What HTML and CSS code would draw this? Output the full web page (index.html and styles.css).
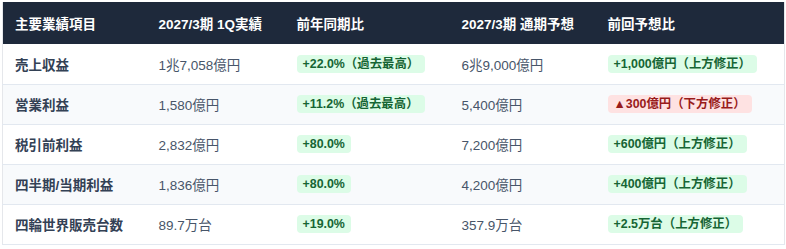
FILE: index.html
```html
<!DOCTYPE html>
<html lang="ja">
<head>
<meta charset="utf-8">
<link rel="stylesheet" href="styles.css">
</head>
<body>
<table class="results">
  <colgroup>
    <col class="c1"><col class="c2"><col class="c3"><col class="c4"><col class="c5">
  </colgroup>
  <thead>
    <tr>
      <th>主要業績項目</th>
      <th>2027/3期 1Q実績</th>
      <th>前年同期比</th>
      <th>2027/3期 通期予想</th>
      <th>前回予想比</th>
    </tr>
  </thead>
  <tbody>
    <tr>
      <td class="label">売上収益</td>
      <td class="val">1兆7,058億円</td>
      <td><span class="badge up">+22.0%（過去最高）</span></td>
      <td class="val">6兆9,000億円</td>
      <td><span class="badge up">+1,000億円（上方修正）</span></td>
    </tr>
    <tr>
      <td class="label">営業利益</td>
      <td class="val">1,580億円</td>
      <td><span class="badge up">+11.2%（過去最高）</span></td>
      <td class="val">5,400億円</td>
      <td><span class="badge down">▲300億円（下方修正）</span></td>
    </tr>
    <tr>
      <td class="label">税引前利益</td>
      <td class="val">2,832億円</td>
      <td><span class="badge up">+80.0%</span></td>
      <td class="val">7,200億円</td>
      <td><span class="badge up">+600億円（上方修正）</span></td>
    </tr>
    <tr>
      <td class="label">四半期/当期利益</td>
      <td class="val">1,836億円</td>
      <td><span class="badge up">+80.0%</span></td>
      <td class="val">4,200億円</td>
      <td><span class="badge up">+400億円（上方修正）</span></td>
    </tr>
    <tr>
      <td class="label">四輪世界販売台数</td>
      <td class="val">89.7万台</td>
      <td><span class="badge up">+19.0%</span></td>
      <td class="val">357.9万台</td>
      <td><span class="badge up">+2.5万台（上方修正）</span></td>
    </tr>
  </tbody>
</table>
</body>
</html>
```
FILE: styles.css
```css
html, body {
  margin: 0;
  padding: 0;
  background: #ffffff;
}
body {
  padding: 2px;
  font-family: "Liberation Sans", "Noto Sans CJK JP", sans-serif;
}
.results {
  width: 782px;
  border-collapse: collapse;
  table-layout: fixed;
  border: 1px solid #e5e7eb;
  border-top: none;
}
.c1 { width: 144px; }
.c2 { width: 138px; }
.c3 { width: 165px; }
.c4 { width: 146px; }
.c5 { width: 189px; }
.results th {
  background: #1e293b;
  color: #ffffff;
  font-size: 13.5px;
  font-weight: 700;
  text-align: left;
  height: 42px;
  padding: 0 12px;
  box-sizing: border-box;
}
.results td {
  height: 40px;
  padding: 0 12px;
  font-size: 13.5px;
  border-bottom: 1px solid #e2e8f0;
  box-sizing: border-box;
}
.results tbody tr:nth-child(even) td {
  background: #f8fafc;
}
.label {
  font-weight: 700;
  color: #334155;
}
.val {
  color: #475569;
}
.badge {
  display: inline-block;
  font-size: 12.4px;
  font-weight: 700;
  line-height: 16px;
  padding: 1px 6px;
  border-radius: 4px;
}
.up {
  background: #dcfce7;
  color: #166534;
}
.down {
  background: #fee2e2;
  color: #991b1b;
}
```
